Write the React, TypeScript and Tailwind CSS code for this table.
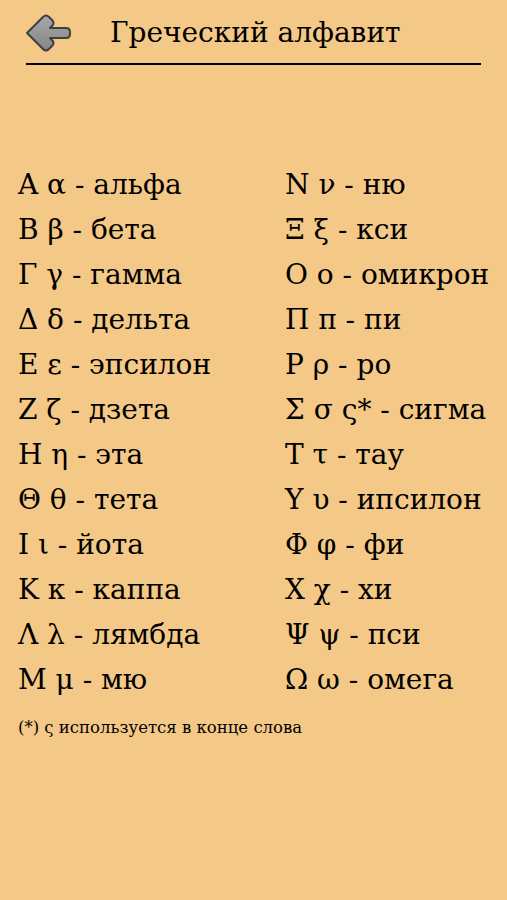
const left = [
  'Α α - альфа',
  'Β β - бета',
  'Γ γ - гамма',
  'Δ δ - дельта',
  'Ε ε - эпсилон',
  'Ζ ζ - дзета',
  'Η η - эта',
  'Θ θ - тета',
  'Ι ι - йота',
  'Κ κ - каппа',
  'Λ λ - лямбда',
  'Μ μ - мю',
];

const right = [
  'Ν ν - ню',
  'Ξ ξ - кси',
  'Ο ο - омикрон',
  'Π π - пи',
  'Ρ ρ - ро',
  'Σ σ ς* - сигма',
  'Τ τ - тау',
  'Υ υ - ипсилон',
  'Φ φ - фи',
  'Χ χ - хи',
  'Ψ ψ - пси',
  'Ω ω - омега',
];

function BackArrow() {
  return (
    <svg width="48" height="46" viewBox="0 0 48 46">
      <defs>
        <linearGradient id="arrowFill" x1="0" y1="0" x2="0" y2="1">
          <stop offset="0" stopColor="#a8a8a8" />
          <stop offset="1" stopColor="#858585" />
        </linearGradient>
      </defs>
      <path
        d="M3 23 L19 7 Q22 4 25 7 L28 10 Q31 13 28 16 L26 18 L42 18 Q46 18 46 22 L46 24 Q46 28 42 28 L26 28 L28 30 Q31 33 28 36 L25 39 Q22 42 19 39 Z"
        fill="url(#arrowFill)"
        stroke="#3f3f3f"
        strokeWidth="2"
        strokeLinejoin="round"
      />
    </svg>
  );
}

export default function App() {
  return (
    <div
      className="w-[507px] h-[900px] bg-[#f4c887] text-black"
      style={{ fontFamily: '"DejaVu Serif", serif' }}
    >
      <div className="flex items-center pl-[24px] pt-[10px] h-[56px]">
        <BackArrow />
        <div className="ml-[38px] text-[28px] leading-none">Греческий алфавит</div>
      </div>
      <div className="mx-[26px] h-[2px] bg-black mt-[7px]" />
      <div className="flex mt-[97px] text-[28px] leading-[45px]">
        <div className="w-[285px] pl-[18px]">
          {left.map((t) => (
            <div key={t} className="whitespace-nowrap">{t}</div>
          ))}
        </div>
        <div className="whitespace-nowrap">
          {right.map((t) => (
            <div key={t}>{t}</div>
          ))}
        </div>
      </div>
      <div className="pl-[18px] mt-[14px] text-[16.5px]">(*) ς используется в конце слова</div>
    </div>
  );
}
